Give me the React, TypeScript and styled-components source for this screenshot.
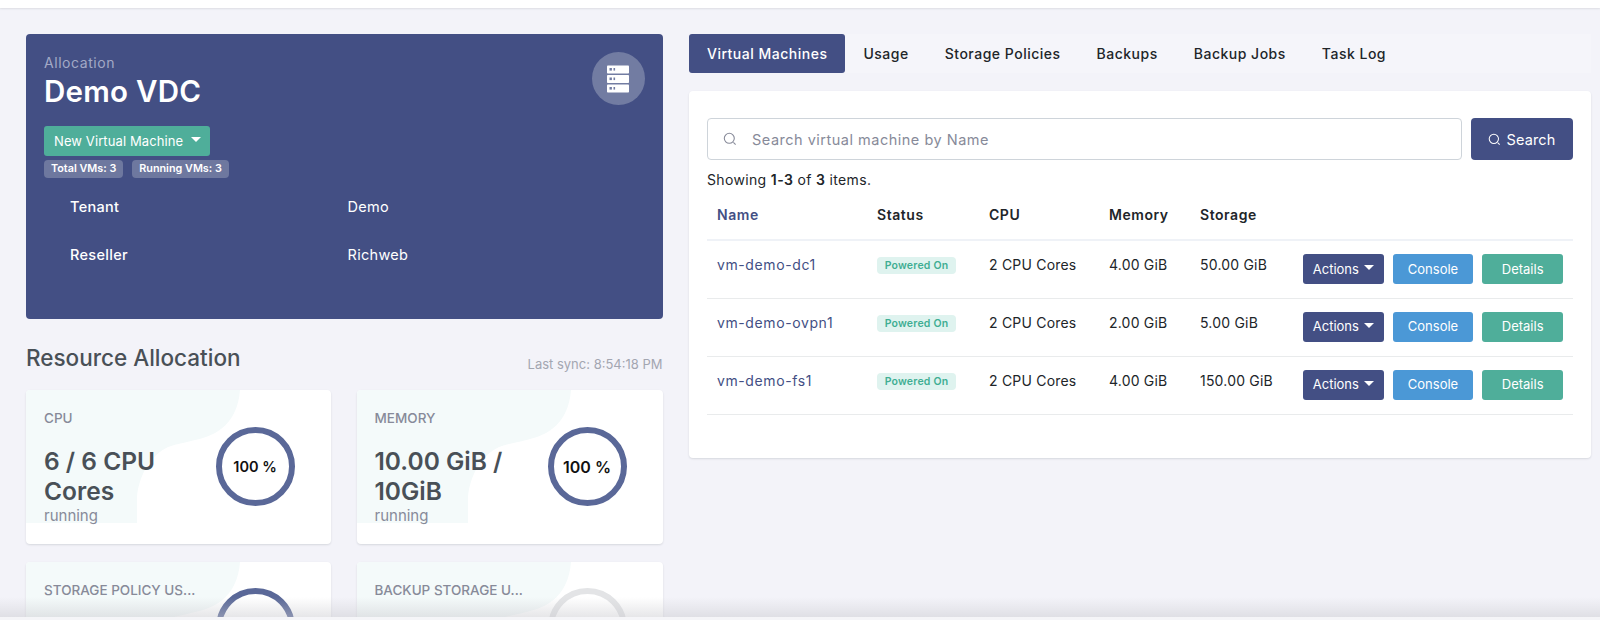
import styled, { createGlobalStyle } from "styled-components";

const NAVY = "#434f84";
const GREEN = "#4fae9a";
const BLUE = "#4b98d6";
const HEADING = "#495057";
const MUTED = "#878a99";

const GlobalStyle = createGlobalStyle`
  html, body {
    margin: 0;
    height: 620px;
    overflow: hidden;
    background: #f3f3f9;
    font-family: Inter, "Liberation Sans", sans-serif;
    font-size: 14px;
    color: #212529;
  }
  * { box-sizing: border-box; }
`;

const Page = styled.div`
  position: relative;
  height: 620px;
  overflow: hidden;
`;

const TopBar = styled.div`
  height: 8px;
  background: #fff;
  box-shadow: 0 1px 2px rgba(56, 65, 74, 0.12);
`;

const Columns = styled.div`
  display: grid;
  grid-template-columns: 636.5px 902px;
  column-gap: 26.5px;
  padding: 26px 0 0 26px;
`;

const Hero = styled.section`
  position: relative;
  height: 285px;
  padding: 20px 18px;
  background: ${NAVY};
  border-radius: 4px;
  color: #fff;
`;

const HeroLabel = styled.div`
  font-size: 14px;
  line-height: 18px;
  letter-spacing: 0.55px;
  color: #a2a9c6;
`;

const HeroTitle = styled.h1`
  margin: 0 0 15px;
  font-size: 29.5px;
  line-height: 39px;
  font-weight: 600;
  letter-spacing: 0.25px;
`;

const Caret = styled.span`
  display: inline-block;
  margin-bottom: 3px;
  border-top: 5px solid #fff;
  border-left: 5.5px solid transparent;
  border-right: 5.5px solid transparent;
`;

const NewButton = styled.button`
  display: flex;
  align-items: center;
  gap: 8px;
  width: 166px;
  height: 30px;
  padding: 0 10px;
  border: 0;
  border-radius: 3px;
  background: ${GREEN};
  color: #fff;
  font: inherit;
  font-size: 13px;
  letter-spacing: 0.1px;
  white-space: nowrap;
`;

const Badges = styled.div`
  display: flex;
  gap: 9px;
  margin-top: 4px;
`;

const CountBadge = styled.span`
  height: 18px;
  padding: 0 7px;
  border-radius: 4px;
  background: #6e789f;
  font-size: 10.8px;
  font-weight: 600;
  line-height: 18px;
`;

const InfoGrid = styled.dl`
  display: grid;
  grid-template-columns: 277.5px 1fr;
  grid-auto-rows: 48px;
  margin: 17px 0 0;
  padding-left: 26px;
`;

const InfoTerm = styled.dt`
  font-size: 14.5px;
  font-weight: 500;
  line-height: 24px;
  letter-spacing: 0.3px;
`;

const InfoValue = styled.dd`
  margin: 0;
  font-size: 14.5px;
  line-height: 24px;
  letter-spacing: 0.3px;
`;

const IconCircle = styled.div`
  position: absolute;
  top: 18px;
  right: 18px;
  display: flex;
  align-items: center;
  justify-content: center;
  width: 53px;
  height: 53px;
  border-radius: 50%;
  background: #727ca2;
`;

const SectionHead = styled.div`
  display: flex;
  align-items: flex-end;
  justify-content: space-between;
  height: 45px;
  margin: 20px 0 6px;
`;

const SectionTitle = styled.h2`
  margin: 0 0 11px;
  font-size: 22.5px;
  font-weight: 500;
  line-height: 30px;
  color: ${HEADING};
`;

const SyncText = styled.span`
  font-size: 13px;
  line-height: 18px;
  margin-bottom: 11px;
  color: #a3a6b1;
`;

const StatGrid = styled.div`
  display: grid;
  grid-template-columns: 304.5px 306px;
  column-gap: 26px;
  row-gap: 18px;
`;

const StatCard = styled.article`
  position: relative;
  display: flex;
  height: 154px;
  padding: 18px 18px 0;
  overflow: hidden;
  background: #fff;
  border-radius: 4px;
  box-shadow: 0 1px 2px rgba(56, 65, 74, 0.15);
`;

const Blob = styled.svg`
  position: absolute;
  top: 0;
  left: 0;
`;

const StatBody = styled.div`
  position: relative;
  flex: 1;
  min-width: 0;
`;

const StatLabel = styled.div`
  height: 20px;
  width: 158px;
  overflow: hidden;
  font-size: 13.5px;
  font-weight: 500;
  line-height: 20px;
  color: ${MUTED};
  white-space: nowrap;
`;

const StatValue = styled.div`
  width: 140px;
  margin-top: 18px;
  font-size: 24.5px;
  font-weight: 600;
  line-height: 30px;
  color: ${HEADING};
`;

const StatNote = styled.div`
  font-size: 15px;
  line-height: 20px;
  color: ${MUTED};
`;

const Ring = styled.div<{ $size: number; $idle?: boolean; $top: number }>`
  position: relative;
  flex: none;
  display: flex;
  align-items: center;
  justify-content: center;
  width: 79px;
  height: 79px;
  margin: ${(p) => p.$top}px 18px 0 0;
  border: 6px solid ${(p) => (p.$idle ? "#e3e4e6" : "#5a6898")};
  border-radius: 50%;
  color: #111;
  font-size: ${(p) => p.$size}px;
  font-weight: 600;
`;

const Tabs = styled.nav`
  display: flex;
  height: 39px;
  margin-bottom: 18px;
  background: #f5f5fa;
`;

const Tab = styled.a<{ $active?: boolean }>`
  padding: 0 18px;
  border-radius: 3px;
  font-size: 14px;
  font-weight: 500;
  line-height: 39px;
  letter-spacing: 0.5px;
  background: ${(p) => (p.$active ? NAVY : "transparent")};
  color: ${(p) => (p.$active ? "#fff" : "#212529")};
`;

const Panel = styled.section`
  height: 367px;
  padding: 27px 18px 0;
  background: #fff;
  border-radius: 4px;
  box-shadow: 0 1px 2px rgba(56, 65, 74, 0.15);
`;

const SearchRow = styled.div`
  display: flex;
  gap: 9px;
  height: 42px;
`;

const SearchField = styled.label`
  display: flex;
  flex: 1;
  align-items: center;
  gap: 15px;
  padding-left: 15px;
  border: 1px solid #ced4da;
  border-radius: 4px;
  color: ${MUTED};
  font-size: 14.5px;
  letter-spacing: 0.5px;
`;

const SearchButton = styled.button`
  display: flex;
  align-items: center;
  justify-content: center;
  gap: 5px;
  width: 102px;
  border: 0;
  border-radius: 4px;
  background: ${NAVY};
  color: #fff;
  font: inherit;
  font-size: 14.5px;
  letter-spacing: 0.15px;
`;

const Summary = styled.div`
  height: 30px;
  font-size: 14px;
  line-height: 21px;
  padding-top: 9px;
  letter-spacing: 0.35px;
  b { font-weight: 600; }
`;

const Table = styled.table`
  width: 866px;
  margin-top: 0;
  border-collapse: collapse;
  table-layout: fixed;
`;

const HeadCell = styled.th<{ $link?: boolean }>`
  height: 50px;
  padding: 0 10px;
  border-bottom: 2px solid #eff2f7;
  font-size: 14px;
  font-weight: 600;
  text-align: left;
  letter-spacing: 0.55px;
  color: ${(p) => (p.$link ? NAVY : "#212529")};
`;

const Cell = styled.td`
  height: 58px;
  padding: 13px 10px 0;
  border-bottom: 1px solid #e9ebec;
  font-size: 14px;
  line-height: 21px;
  vertical-align: top;
  letter-spacing: 0.2px;
`;

const VmLink = styled.a`
  color: ${NAVY};
  letter-spacing: 0.6px;
`;

const StatusBadge = styled.span`
  display: inline-block;
  width: 79px;
  height: 17px;
  margin-top: 3px;
  border-radius: 4px;
  background: #dff3ef;
  color: #3fae93;
  font-size: 10.5px;
  font-weight: 600;
  line-height: 17px;
  text-align: center;
  vertical-align: top;
`;

const ActionCell = styled(Cell)`
  padding: 13px 10px 0 13px;
`;

const ActionRow = styled.div`
  display: flex;
  gap: 9px;
`;

const ActionButton = styled.button<{ $tone: string }>`
  display: flex;
  align-items: center;
  justify-content: center;
  gap: 5px;
  width: 81px;
  height: 30px;
  padding: 0;
  border: 0;
  border-radius: 3px;
  background: ${(p) => p.$tone};
  color: #fff;
  font: inherit;
  font-size: 13px;
`;

const BottomFade = styled.div`
  position: absolute;
  left: 0;
  right: 0;
  bottom: 0;
  height: 23px;
  background: linear-gradient(to bottom, rgba(200, 200, 205, 0) 0, rgba(200, 200, 205, 0.45) 20px, #f5f5f8 20px);
`;

function ServerIcon() {
  return (
    <svg width="24" height="28" viewBox="0 0 24 28">
      {[0, 9.5, 19].map((y) => (
        <g key={y}>
          <rect x="1" y={y + 0.5} width="22" height="8" rx="0.8" fill="#fff" />
          <rect x="3.5" y={y + 3} width="2.4" height="2.6" fill="#727ca2" />
          <rect x="7.5" y={y + 3} width="1.6" height="2.6" fill="#727ca2" />
        </g>
      ))}
    </svg>
  );
}

function SearchGlyph({ size }: { size: number }) {
  return (
    <svg width={size} height={size} viewBox="0 0 14 14" fill="none" stroke="currentColor" strokeWidth="1.1">
      <circle cx="6.3" cy="6.3" r="5" />
      <path d="M10.4 10.4 12.6 12.6" />
    </svg>
  );
}

type Stat = { label: string; value: string; note?: string; size: number; top: number; idle?: boolean };

const STATS: Stat[] = [
  { label: "CPU", value: "6 / 6 CPU Cores", note: "running", size: 14.5, top: 19 },
  { label: "MEMORY", value: "10.00 GiB / 10GiB", note: "running", size: 16, top: 19 },
  { label: "STORAGE POLICY US...", value: "", size: 14, top: 8 },
  { label: "BACKUP STORAGE U...", value: "", size: 14, top: 8, idle: true },
];

const VMS = [
  { name: "vm-demo-dc1", memory: "4.00 GiB", storage: "50.00 GiB" },
  { name: "vm-demo-ovpn1", memory: "2.00 GiB", storage: "5.00 GiB" },
  { name: "vm-demo-fs1", memory: "4.00 GiB", storage: "150.00 GiB" },
];

const TABS = ["Virtual Machines", "Usage", "Storage Policies", "Backups", "Backup Jobs", "Task Log"];

export default function App() {
  return (
    <Page>
      <GlobalStyle />
      <TopBar />
      <Columns>
        <div>
          <Hero>
            <HeroLabel>Allocation</HeroLabel>
            <HeroTitle>Demo VDC</HeroTitle>
            <NewButton>
              New Virtual Machine <Caret />
            </NewButton>
            <Badges>
              <CountBadge>Total VMs: 3</CountBadge>
              <CountBadge>Running VMs: 3</CountBadge>
            </Badges>
            <InfoGrid>
              <InfoTerm>Tenant</InfoTerm>
              <InfoValue>Demo</InfoValue>
              <InfoTerm>Reseller</InfoTerm>
              <InfoValue>Richweb</InfoValue>
            </InfoGrid>
            <IconCircle>
              <ServerIcon />
            </IconCircle>
          </Hero>
          <SectionHead>
            <SectionTitle>Resource Allocation</SectionTitle>
            <SyncText>Last sync: 8:54:18 PM</SyncText>
          </SectionHead>
          <StatGrid>
            {STATS.map((stat) => (
              <StatCard key={stat.label}>
                <Blob width="214" height="133" viewBox="0 0 214 133">
                  <path
                    d="M0 0H214C212 25 200 40 180 47C165 52 152 53 142 57C125 65 113 85 111 107V133H0Z"
                    fill="#f4fafa"
                  />
                </Blob>
                <StatBody>
                  <StatLabel>{stat.label}</StatLabel>
                  <StatValue>{stat.value}</StatValue>
                  {stat.note && <StatNote>{stat.note}</StatNote>}
                </StatBody>
                <Ring $size={stat.size} $idle={stat.idle} $top={stat.top}>
                  {stat.value ? "100 %" : ""}
                </Ring>
              </StatCard>
            ))}
          </StatGrid>
        </div>
        <div>
          <Tabs>
            {TABS.map((tab, index) => (
              <Tab key={tab} $active={index === 0}>
                {tab}
              </Tab>
            ))}
          </Tabs>
          <Panel>
            <SearchRow>
              <SearchField>
                <SearchGlyph size={14} />
                Search virtual machine by Name
              </SearchField>
              <SearchButton>
                <SearchGlyph size={13} />
                Search
              </SearchButton>
            </SearchRow>
            <Summary>
              Showing <b>1-3</b> of <b>3</b> items.
            </Summary>
            <Table>
              <colgroup>
                <col style={{ width: 160 }} />
                <col style={{ width: 112 }} />
                <col style={{ width: 120 }} />
                <col style={{ width: 91 }} />
                <col style={{ width: 100 }} />
                <col />
              </colgroup>
              <thead>
                <tr>
                  <HeadCell $link>Name</HeadCell>
                  <HeadCell>Status</HeadCell>
                  <HeadCell>CPU</HeadCell>
                  <HeadCell>Memory</HeadCell>
                  <HeadCell>Storage</HeadCell>
                  <HeadCell />
                </tr>
              </thead>
              <tbody>
                {VMS.map((vm) => (
                  <tr key={vm.name}>
                    <Cell>
                      <VmLink>{vm.name}</VmLink>
                    </Cell>
                    <Cell>
                      <StatusBadge>Powered On</StatusBadge>
                    </Cell>
                    <Cell>2 CPU Cores</Cell>
                    <Cell>{vm.memory}</Cell>
                    <Cell>{vm.storage}</Cell>
                    <ActionCell>
                      <ActionRow>
                        <ActionButton $tone={NAVY}>
                          Actions <Caret />
                        </ActionButton>
                        <ActionButton $tone={BLUE}>Console</ActionButton>
                        <ActionButton $tone={GREEN}>Details</ActionButton>
                      </ActionRow>
                    </ActionCell>
                  </tr>
                ))}
              </tbody>
            </Table>
          </Panel>
        </div>
      </Columns>
      <BottomFade />
    </Page>
  );
}
